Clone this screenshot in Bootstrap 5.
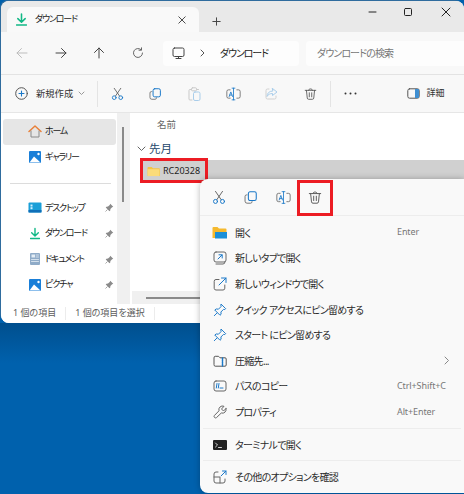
<!DOCTYPE html>
<html lang="ja">
<head>
<meta charset="utf-8">
<title>ダウンロード</title>
<link href="https://cdn.jsdelivr.net/npm/bootstrap@5.3.0/dist/css/bootstrap.min.css" rel="stylesheet">
<style>
html,body{width:464px;height:494px;overflow:hidden}
body{background:#0061ad;font:10px/1.2 "Noto Sans","Noto Sans CJK JP",sans-serif;font-feature-settings:"palt";color:#222;position:relative}
svg{display:block;flex:none;fill:none;stroke-linecap:round;stroke-linejoin:round}
.shade{height:40px;background:linear-gradient(#004f8e,#0061ad)}
.win{height:322px;margin-left:1px;margin-top:1px;background:#fff;border-radius:8px 8px 0 8px;overflow:hidden;box-shadow:-1px -1px 0 #2f6c9e}
.titlebar{height:31px;background:#e9e9e9;padding:6px 0 0 6px}
.wintab{width:192px;height:25px;background:#f9f9f9;border-radius:6px 6px 0 0;padding:0 13px 0 9px;font-size:9px;letter-spacing:-1.2px}
.wintab span{margin-left:8px}
.plusbtn{margin-left:13px;width:14px;margin-top:3px}
.winctl{width:36.5px;margin-top:0}
.addr{height:43px;background:#f8f8f8;border-bottom:1px solid #e3e3e3;padding:0 0 0 2px}
.navcell{width:38.5px}
.navgap{width:6px}
.pathbox{width:136px;height:25px;background:#fdfdfd;border-radius:4px;padding-left:9px;margin-right:7px;letter-spacing:-1.1px}
.pathsep{margin:0 15px 0 15px}
.searchbox{flex:1;height:25px;background:#fdfdfd;border-radius:4px 0 0 4px;padding-left:11px;color:#767676;font-size:10px;letter-spacing:-.9px}
.cmdbar{height:38px;background:#f8f8f8;border-bottom:1px solid #e6e6e6;padding-left:14px}
.newbtn{width:82px;font-size:9.3px;gap:8px;color:#333}
.newbtn svg.ms-1{margin-left:-3px!important}
.vrule{width:1px;height:26px;background:#e4e4e4}
.cmdcell{width:38.6px}
.morecell{width:40px}
.detail{margin-left:36px;gap:7px;font-size:9px;color:#333}
.bodyrow{height:191px}
.sidebar{width:116px;padding:6px 0 0 2px;font-size:9px;letter-spacing:-1.2px}
.navitem{height:25.6px;width:113px;padding-left:25px;gap:3px;border-radius:3px}
.navitem.current{background:#e6e6e6}
.navitem .pinmark{margin-left:auto;margin-right:2px}
.dlmark{margin:0 2px}
.siderule{height:1px;background:#dcdcdc;width:101px;margin:13px 0 11px 7px}
.vscroll{width:13px;background:#f0f0f0;position:relative}
.vthumb{width:2px;height:75px;background:#8a8a8a;margin:14px 0 0 5px}
.mainpane{flex:1;padding:0 0 0 3px;min-width:0;display:flex;flex-direction:column}
.colhead{height:27px;padding-left:24px;font-size:9.5px;color:#666;padding-top:6px}
.grouphead{height:17px;color:#24486b;font-size:11.5px;padding-left:4px;gap:3px}
.filerow{height:22px;background:#d0d0d0;margin:3px 0 0 8px;position:relative;padding-left:6px;gap:3px;color:#222;font-size:9px}
.redbox{position:absolute;border:3px solid #ec1c24;left:-1px;top:-2px;width:68px;height:25px}
.hscroll{margin-top:auto;height:13px;background:#f0f0f0;margin-left:-1px;padding-left:14px}
.hthumb{height:2px;width:60px;background:#8a8a8a}
.statusbar{height:19px;padding-left:12px;color:#5c5c5c;font-size:9px;background:#fff}
.statusrule{width:1px;height:13px;background:#ececec;margin:0 9px}
.ctxmenu{position:absolute;left:200px;top:179px;width:264px;height:314px;background:#f9f9f9;border-radius:8px 0 0 8px;box-shadow:0 0 6px rgba(0,0,0,.28)}
.ctxtools{height:37px;padding:1px 0 0 3px;border-bottom:1px solid #ededed;position:relative}
.ctxcell{width:32px}
.redbox2{position:absolute;border:3px solid #ec1c24;left:97px;top:1px;width:36px;height:36px}
.ctxlist{padding-top:4px}
.ctxitem{height:25.6px;padding:0 14px 0 12px;gap:8px;color:#2b2b2b;letter-spacing:-.7px}
.ctxitem .ico{width:15px;display:flex;justify-content:center}
.ctxkey{margin-left:auto;color:#777;font-size:9px;font-feature-settings:normal;width:53px;letter-spacing:-.1px;white-space:nowrap}
.ctxrule{height:1px;background:#ededed;margin:3px 0 3px 3px;width:258px}
</style>
</head>
<body>
<svg width="0" height="0" class="position-absolute">
<defs>
<symbol id="i-cut" viewBox="0 0 16 16"><path d="M4 1l6.5 9.5M12 1L5.5 10.5" stroke="#555" stroke-width="1"/><circle cx="4" cy="12.5" r="2.3" stroke="#1a78c8" stroke-width="1.1"/><circle cx="12" cy="12.5" r="2.3" stroke="#1a78c8" stroke-width="1.1"/></symbol>
<symbol id="i-copy" viewBox="0 0 16 16"><path d="M3.5 5H3a1.8 1.8 0 0 0-1.8 1.8v5.4A2.3 2.3 0 0 0 3.5 14.500h4A1.800 1.800 0 0 0 9.300 12.700" stroke="#666" stroke-width="1"/><rect x="5" y="1.500" width="9" height="10" rx="2" stroke="#1a78c8" stroke-width="1.200"/></symbol>
<symbol id="i-rename" viewBox="0 0 18 16"><path d="M5 3H3a2 2 0 0 0-2 2v6a2 2 0 0 0 2 2h2M13 3h2a2 2 0 0 1 2 2v6a2 2 0 0 1-2 2h-2" stroke="#666" stroke-width="1"/><path d="M9 1v14M7.300 1h3.400M7.300 15h3.400" stroke="#1a78c8" stroke-width="1"/><path d="M3.800 11l2-5.500 2 5.500M4.500 9.300h2.700" stroke="#1a78c8" stroke-width="1"/></symbol>
<symbol id="i-trash" viewBox="0 0 16 16"><path d="M1.500 3.500h13M5.500 3.500C5.500 1 10.500 1 10.500 3.500M3 3.500l1 9.500a1.700 1.700 0 0 0 1.700 1.500h4.600A1.700 1.700 0 0 0 12 13l1-9.500M6.500 6.500v5M9.500 6.500v5" stroke="#5a5a5a" stroke-width="1.100"/></symbol>
<symbol id="i-pin" viewBox="0 0 16 16"><path d="M9.500 1.500l5 5-1 1-1.500-.2-3 3 .3 2.500-1.300 1.200-6-6L3.700 6.800l2.500.3 3-3L9 2.500z" stroke="#1a78c8" stroke-width="1.100"/><path d="M4.500 11.500L1.500 14.500" stroke="#1a78c8" stroke-width="1.100"/></symbol>
<symbol id="i-mini" viewBox="0 0 12 12"><path d="M7 1l4 4-1.500.7-2.300 2.300-.2 2L6 11 1 6l1-1 2 -.2L6.300 2.500z" fill="#8b8b8b"/><path d="M3 9l-2 2" stroke="#8b8b8b"/></symbol>
<symbol id="i-dl" viewBox="1 0 12 14"><path d="M7 1v8.500M3 6l4 4 4-4" stroke="#12b886" stroke-width="1.700"/><path d="M1.500 13h11" stroke="#12b886" stroke-width="1.600"/></symbol>
<symbol id="i-pic" viewBox="0 0 14 14"><rect x="1" y="1" width="12" height="12" rx="1" fill="#1a7fd8"/><path d="M1.500 12.500L6 6.500l6.500 6z" fill="#fff"/><circle cx="10.500" cy="4" r="1.200" fill="#fff"/></symbol>
</defs>
</svg>

<div class="win d-flex flex-column">
  <div class="titlebar d-flex">
    <div class="wintab d-flex align-items-center">
      <svg width="11" height="13"><use href="#i-dl"/></svg>
      <span>ダウンロード</span>
      <svg class="ms-auto" width="8" height="8" viewBox="0 0 10 10"><path d="M1 1l8 8M9 1L1 9" stroke="#444" stroke-width="1.200"/></svg>
    </div>
    <div class="plusbtn d-flex align-items-center"><svg width="9" height="9" viewBox="0 0 11 11"><path d="M5.500 1v9M1 5.500h9" stroke="#444" stroke-width="1.200"/></svg></div>
    <div class="ms-auto d-flex align-items-start">
      <div class="winctl d-flex justify-content-center"><svg width="10" height="10" viewBox="0 0 10 10"><path d="M1 5h7" stroke="#222"/></svg></div>
      <div class="winctl d-flex justify-content-center"><svg width="10" height="10" viewBox="0 0 10 10"><rect x=".5" y="1.500" width="7" height="7" rx="1" stroke="#222"/></svg></div>
      <div class="winctl d-flex justify-content-center"><svg width="10" height="10" viewBox="0 0 10 10"><path d="M1 1l8 8M9 1L1 9" stroke="#222"/></svg></div>
    </div>
  </div>

  <div class="addr d-flex align-items-center">
    <div class="navcell d-flex justify-content-center"><svg width="12" height="12" viewBox="0 0 12 12"><path d="M11 6H1M5.500 1.500L1 6l4.500 4.500" stroke="#bdbdbd"/></svg></div>
    <div class="navcell d-flex justify-content-center"><svg width="12" height="12" viewBox="0 0 12 12"><path d="M1 6h10M6.500 1.500L11 6l-4.500 4.500" stroke="#444"/></svg></div>
    <div class="navcell d-flex justify-content-center"><svg width="12" height="12" viewBox="0 0 12 12"><path d="M6 11V1M1.500 5.500L6 1l4.500 4.500" stroke="#444"/></svg></div>
    <div class="navcell d-flex justify-content-center"><svg width="12" height="12" viewBox="0 0 12 12"><path d="M10.500 6A4.500 4.500 0 1 1 9 2.600M9.500 .8v2.400H7" stroke="#666"/></svg></div>
    <div class="navgap"></div>
    <div class="pathbox d-flex align-items-center">
      <svg width="13" height="13" viewBox="0 0 13 13"><rect x="1" y="1" width="11" height="8.500" rx="1.500" stroke="#444"/><path d="M4 11.500h5M6.500 9.500v2" stroke="#444"/></svg>
      <svg class="pathsep" width="5" height="8" viewBox="0 0 5 8"><path d="M1 1l3 3-3 3" stroke="#555"/></svg>
      <span>ダウンロード</span>
    </div>
    <div class="searchbox d-flex align-items-center">ダウンロードの検索</div>
  </div>

  <div class="cmdbar d-flex align-items-center">
    <div class="newbtn d-flex align-items-center">
      <svg width="13" height="13" viewBox="0 0 13 13"><circle cx="6.500" cy="6.500" r="5.800" stroke="#555"/><path d="M6.500 4v5M4 6.500h5" stroke="#1a78c8" stroke-width="1.100"/></svg>
      <span>新規作成</span>
      <svg class="ms-1" width="7" height="5" viewBox="0 0 7 5"><path d="M1 1l2.500 2.500L6 1" stroke="#999"/></svg>
    </div>
    <div class="vrule"></div>
    <div class="cmdcell d-flex justify-content-center"><svg width="13" height="14"><use href="#i-cut"/></svg></div>
    <div class="cmdcell d-flex justify-content-center"><svg width="13" height="14"><use href="#i-copy"/></svg></div>
    <div class="cmdcell d-flex justify-content-center"><svg width="13" height="14" viewBox="0 0 13 14"><path d="M3.500 2.500H2A1 1 0 0 0 1 3.500v8.500a1 1 0 0 0 1 1h2M9 2.500h1.500" stroke="#c9c9c9"/><rect x="3.500" y=".8" width="5" height="3" rx="1" stroke="#c9c9c9"/><rect x="5.500" y="5" width="6.500" height="8.500" rx="1.500" stroke="#a9cdea"/></svg></div>
    <div class="cmdcell d-flex justify-content-center"><svg width="15" height="14"><use href="#i-rename"/></svg></div>
    <div class="cmdcell d-flex justify-content-center"><svg width="13" height="13" viewBox="0 0 13 13"><path d="M7.500 1.500L12 5 7.500 8.500V6.500C5 6.500 3 7.500 2 9.500c0-3 2-5.500 5.500-5.500z" stroke="#a9cdea"/><path d="M4 2H2.500A1.500 1.500 0 0 0 1 3.500v7A1.500 1.500 0 0 0 2.500 12h7a1.500 1.500 0 0 0 1.500-1.500V9" stroke="#d0d0d0"/></svg></div>
    <div class="cmdcell d-flex justify-content-center"><svg width="13" height="14"><use href="#i-trash"/></svg></div>
    <div class="vrule"></div>
    <div class="morecell d-flex justify-content-center"><svg width="13" height="3" viewBox="0 0 13 3"><circle cx="1.500" cy="1.500" r="1" fill="#333"/><circle cx="6.500" cy="1.500" r="1" fill="#333"/><circle cx="11.500" cy="1.500" r="1" fill="#333"/></svg></div>
    <div class="detail d-flex align-items-center">
      <svg width="13" height="11" viewBox="0 0 13 11"><rect x=".8" y=".8" width="11.400" height="9.400" rx="1.800" stroke="#555"/><path d="M8 1v9h3a1 1 0 0 0 1-1V2a1 1 0 0 0-1-1z" fill="#3f8fd2"/></svg>
      <span>詳細</span>
    </div>
  </div>

  <div class="bodyrow d-flex">
    <div class="sidebar">
      <div class="navitem current d-flex align-items-center">
        <svg width="14" height="13" viewBox="0 0 14 13"><path d="M1 6.500L7 1l6 5.500" stroke="#e8803a" stroke-width="1.500"/><path d="M3 6v6h8V6" stroke="#8a8a8a"/></svg><span>ホーム</span>
      </div>
      <div class="navitem d-flex align-items-center">
        <svg width="14" height="14"><use href="#i-pic"/></svg><span>ギャラリー</span>
      </div>
      <div class="siderule"></div>
      <div class="navitem d-flex align-items-center">
        <svg width="14" height="11" viewBox="0 0 14 11"><rect x=".5" y=".5" width="13" height="10" rx="1" fill="#1a9fd8"/><rect x=".5" y="8" width="13" height="2.500" fill="#0f6fb8"/><rect x="2.500" y="2.500" width="2" height="2" fill="#cfefff"/><rect x="2.500" y="5.200" width="2" height="2" fill="#cfefff"/></svg><span>デスクトップ</span>
        <svg class="pinmark" width="9" height="9"><use href="#i-mini"/></svg>
      </div>
      <div class="navitem d-flex align-items-center">
        <svg class="dlmark" width="10" height="13"><use href="#i-dl"/></svg><span>ダウンロード</span>
        <svg class="pinmark" width="9" height="9"><use href="#i-mini"/></svg>
      </div>
      <div class="navitem d-flex align-items-center">
        <svg width="14" height="14" viewBox="0 0 14 14"><rect x="2" y="1" width="10" height="12" rx="1" fill="#8fabc8"/><rect x="3.500" y="2.500" width="3.500" height="3" fill="#e4edf5"/><path d="M8 3h2.500M8 5h2.500M3.500 7.500h7M3.500 9.500h7" stroke="#e4edf5" stroke-width=".8"/></svg><span>ドキュメント</span>
        <svg class="pinmark" width="9" height="9"><use href="#i-mini"/></svg>
      </div>
      <div class="navitem d-flex align-items-center">
        <svg width="14" height="14"><use href="#i-pic"/></svg><span>ピクチャ</span>
        <svg class="pinmark" width="9" height="9"><use href="#i-mini"/></svg>
      </div>
    </div>
    <div class="vscroll"><div class="vthumb"></div></div>
    <div class="mainpane">
      <div class="colhead">名前</div>
      <div class="grouphead d-flex align-items-center">
        <svg width="9" height="6" viewBox="0 0 9 6"><path d="M1 1l3.500 3.500L8 1" stroke="#666"/></svg><span>先月</span>
      </div>
      <div class="filerow d-flex align-items-center">
        <svg width="13" height="11" viewBox="0 0 14 12"><path d="M.5 2a1 1 0 0 1 1-1h3.500l1.500 1.500h6.500a1 1 0 0 1 1 1V11H.5z" fill="#f5c544"/><rect x=".5" y="3.500" width="13" height="7.500" fill="#fbdc7a"/></svg>
        <span>RC20328</span>
        <div class="redbox"></div>
      </div>
      <div class="hscroll d-flex align-items-center"><div class="hthumb"></div></div>
    </div>
  </div>

  <div class="statusbar d-flex align-items-center">
    <span>1 個の項目</span><div class="statusrule"></div><span>1 個の項目を選択</span><div class="statusrule"></div>
  </div>
</div>

<div class="shade"></div>

<div class="ctxmenu">
  <div class="ctxtools d-flex align-items-center">
    <div class="ctxcell d-flex justify-content-center"><svg width="14" height="15"><use href="#i-cut"/></svg></div>
    <div class="ctxcell d-flex justify-content-center"><svg width="14" height="15"><use href="#i-copy"/></svg></div>
    <div class="ctxcell d-flex justify-content-center"><svg width="15" height="15"><use href="#i-rename"/></svg></div>
    <div class="ctxcell d-flex justify-content-center"><svg width="14" height="15"><use href="#i-trash"/></svg></div>
    <div class="redbox2"></div>
  </div>
  <div class="ctxlist">
    <div class="ctxitem d-flex align-items-center"><span class="ico"><svg width="15" height="13" viewBox="0 0 15 13"><path d="M.5 2a1 1 0 0 1 1-1h4l1.500 1.500h6.500a1 1 0 0 1 1 1V12H.5z" fill="#f5b92e"/><rect x="3" y="6" width="12" height="6.500" fill="#1a8fd8"/></svg></span><span>開く</span><span class="ctxkey">Enter</span></div>
    <div class="ctxitem d-flex align-items-center"><span class="ico"><svg width="14" height="14" viewBox="0 0 14 14"><path d="M3 13h7a2 2 0 0 0 2-2" stroke="#666"/><rect x="1" y="1" width="12" height="10" rx="2" stroke="#666"/><path d="M5 8l4-4M6 3.800h3.200V7" stroke="#1a78c8"/></svg></span><span>新しいタブで開く</span></div>
    <div class="ctxitem d-flex align-items-center"><span class="ico"><svg width="14" height="14" viewBox="0 0 14 14"><path d="M6 2.500H3A1.800 1.800 0 0 0 1.200 4.300v7A1.800 1.800 0 0 0 3 13h7a1.800 1.800 0 0 0 1.800-1.800V8" stroke="#666"/><path d="M6 8l7-7M8.500 1H13v4.500" stroke="#1a78c8"/></svg></span><span>新しいウィンドウで開く</span></div>
    <div class="ctxitem d-flex align-items-center"><span class="ico"><svg width="14" height="14"><use href="#i-pin"/></svg></span><span>クイック アクセスにピン留めする</span></div>
    <div class="ctxitem d-flex align-items-center"><span class="ico"><svg width="14" height="14"><use href="#i-pin"/></svg></span><span>スタート にピン留めする</span></div>
    <div class="ctxitem d-flex align-items-center"><span class="ico"><svg width="14" height="12" viewBox="0 0 14 12"><path d="M1 2.500a1.200 1.200 0 0 1 1.200-1.200h3.300l1.500 1.500h5a1.200 1.200 0 0 1 1.200 1.200v6a1.200 1.200 0 0 1-1.200 1.200H2.200A1.200 1.200 0 0 1 1 10z" stroke="#555"/><path d="M9.500 3v8" stroke="#1a78c8" stroke-width="1.500" stroke-dasharray="1.300 .7"/></svg></span><span>圧縮先...</span><svg class="ms-auto" width="6" height="9" viewBox="0 0 6 9"><path d="M1 1l3.500 3.500L1 8" stroke="#888"/></svg></div>
    <div class="ctxitem d-flex align-items-center"><span class="ico"><svg width="14" height="12" viewBox="0 0 14 12"><rect x="1" y="1" width="12" height="10" rx="2" stroke="#666"/><path d="M4 3.500L3.300 8M6 3.500L5.300 8M7 8h3" stroke="#1a78c8"/></svg></span><span>パスのコピー</span><span class="ctxkey">Ctrl+Shift+C</span></div>
    <div class="ctxitem d-flex align-items-center"><span class="ico"><svg width="14" height="14" viewBox="0 0 14 14"><path d="M13 3.500L10.500 6 8.500 4 11 1.300A3.700 3.700 0 0 0 6 5.800L1.400 10.500a1.500 1.500 0 0 0 2.100 2.100L8.300 8A3.700 3.700 0 0 0 13 3.500z" stroke="#666"/></svg></span><span>プロパティ</span><span class="ctxkey">Alt+Enter</span></div>
    <div class="ctxrule"></div>
    <div class="ctxitem d-flex align-items-center"><span class="ico"><svg width="14" height="10" viewBox="0 0 14 10"><rect width="14" height="10" rx="1" fill="#222"/><path d="M2.500 3l2 2-2 2M5.500 7.500h3" stroke="#fff" stroke-width=".8"/></svg></span><span>ターミナルで開く</span></div>
    <div class="ctxrule"></div>
    <div class="ctxitem d-flex align-items-center"><span class="ico"><svg width="14" height="14" viewBox="0 0 14 14"><path d="M5 2H3a2 2 0 0 0-2 2v7a2 2 0 0 0 2 2h7a2 2 0 0 0 2-2V9M1 7h6v6" stroke="#666"/><path d="M8 6l5-5M9.500 1H13v3.500" stroke="#1a78c8"/></svg></span><span>その他のオプションを確認</span></div>
  </div>
</div>
</body>
</html>
